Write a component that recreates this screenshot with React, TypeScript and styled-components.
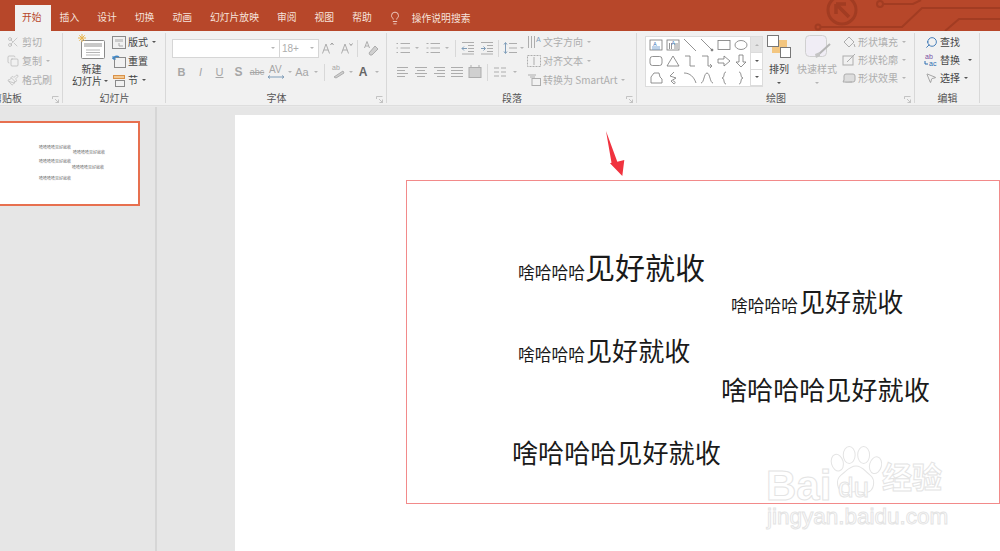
import React from "react";
import styled, { createGlobalStyle } from "styled-components";
import { Scissors, Copy, Paintbrush, Search, MousePointer2, Lightbulb } from "lucide-react";

const Global = createGlobalStyle`
  html, body { margin: 0; padding: 0; width: 100%; height: 100%; overflow: hidden; background: #e6e6e6; }
  #root { width: 1000px; height: 551px; }
  * { box-sizing: border-box; }
`;
const FONT = `"Noto Sans CJK SC", "Noto Sans", sans-serif`;

const Page = styled.div`
  width: 1000px; height: 551px; display: flex; flex-direction: column; overflow: hidden;
  font-family: ${FONT}; position: relative; background: #e6e6e6;
`;
const TitleBar = styled.div`
  position: relative; height: 31px; flex: none; background: #b7472a; display: flex; align-items: flex-end;
  padding-left: 15px; color: #f6e3dc; font-size: 9.8px; overflow: hidden;
`;
const Tab = styled.div<{ $active?: boolean }>`
  height: 26px; display: flex; align-items: center; padding: 0 9px 1px ${(p) => (p.$active ? "7px" : "9px")};
  background: ${(p) => (p.$active ? "#f1f1f1" : "transparent")}; color: ${(p) => (p.$active ? "#b7472a" : "#f6e3dc")};
  white-space: nowrap; line-height: 1;
`;
const TellMe = styled.div`
  height: 26px; display: flex; align-items: center; gap: 10px; margin-left: 7px; padding-bottom: 1px; white-space: nowrap;
`;
const Circuit = styled.svg`
  position: absolute; right: 0; top: 0; width: 200px; height: 31px;
`;
const Ribbon = styled.div`
  height: 75px; flex: none; background: #f1f1f1; display: flex; border-bottom: 1px solid #dedede; overflow: hidden;
`;
const Group = styled.div<{ $w: number; $off?: number }>`
  position: relative; flex: none; width: ${(p) => p.$w}px; margin-left: ${(p) => p.$off ?? 0}px;
  display: flex; flex-direction: column; height: 74px;
  &::after { content: ""; position: absolute; right: 0; top: 2px; bottom: 2px; width: 1px; background: #d8d8d8; }
`;
const Body = styled.div<{ $pl: number; $col?: boolean }>`
  flex: none; height: 60px; padding: 2px 0 0 ${(p) => p.$pl}px; display: flex; flex-direction: ${(p) => (p.$col ? "column" : "row")};
`;
const GroupLabel = styled.div`
  flex: none; height: 14px; text-align: center; font-size: 10px; line-height: 14px; color: #555;
`;
const Launcher = styled.svg`
  position: absolute; right: 4px; bottom: 2px; width: 7px; height: 7px; color: #b8b8b8;
`;
const Stack = styled.div<{ $w?: number }>`
  display: flex; flex-direction: column; gap: 1px; ${(p) => (p.$w ? `width:${p.$w}px;flex:none;` : "")}
`;
const SmallBtn = styled.div<{ $on?: boolean }>`
  height: 18px; display: flex; align-items: center; gap: 2px; font-size: 10px; line-height: 1; white-space: nowrap;
  color: ${(p) => (p.$on ? "#444" : "#adadad")};
`;
const IconBox = styled.span<{ $w?: number; $c?: string }>`
  display: inline-flex; align-items: center; justify-content: center; flex: none;
  width: ${(p) => p.$w ?? 14}px; height: 14px; color: ${(p) => p.$c ?? "#adadad"};
`;
const Caret = styled.span<{ $on?: boolean }>`
  display: inline-block; flex: none; margin-left: 2px; width: 0; height: 0;
  border-left: 2px solid transparent; border-right: 2px solid transparent;
  border-top: 2.5px solid ${(p) => (p.$on ? "#555" : "#b5b5b5")};
`;
const BigBtn = styled.div<{ $w: number; $on?: boolean; $ml?: number }>`
  width: ${(p) => p.$w}px; flex: none; display: flex; flex-direction: column; align-items: center;
  margin-left: ${(p) => p.$ml ?? 0}px;
  font-size: 10px; line-height: 12px; color: ${(p) => (p.$on ? "#444" : "#adadad")}; white-space: nowrap;
`;
const BigIcon = styled.svg`
  width: 28px; height: 26px; margin-top: 1px; margin-bottom: 3px; flex: none;
`;
const Line = styled.div`
  display: flex; align-items: center; height: 12px;
`;
const FieldRow = styled.div`
  display: flex; align-items: center; height: 20px; margin-top: 5px; padding-right: 4px;
`;
const Field = styled.div<{ $w: number }>`
  width: ${(p) => p.$w}px; height: 19px; background: #fff; border: 1px solid #d6d6d6; margin-right: -1px;
  display: flex; align-items: center; justify-content: space-between; padding: 0 4px 0 2px;
  font-size: 10px; color: #adadad; font-family: "Liberation Sans", sans-serif;
`;
const ToolRow = styled.div`
  display: flex; align-items: center; height: 20px;
`;
const Tool = styled.span<{ $w: number; $on?: boolean; $b?: boolean; $i?: boolean; $u?: boolean; $s?: boolean; $fs?: number }>`
  width: ${(p) => p.$w}px; flex: none; display: inline-flex; align-items: center; justify-content: center;
  font-family: "Liberation Sans", sans-serif; font-size: ${(p) => p.$fs ?? 11}px; color: ${(p) => (p.$on ? "#666" : "#a6a6a6")};
  font-weight: ${(p) => (p.$b ? 700 : 400)}; font-style: ${(p) => (p.$i ? "italic" : "normal")};
  text-decoration: ${(p) => (p.$u ? "underline" : p.$s ? "line-through" : "none")};
`;
const VSep = styled.span<{ $mx: number }>`
  width: 1px; height: 17px; background: #d8d8d8; flex: none; margin: 0 ${(p) => p.$mx}px;
`;
const Gallery = styled.div`
  display: flex; height: 51px; margin-top: 3px; flex: none; border: 1px solid #dcdcdc; background: #fff;
`;
const Shapes = styled.div`
  width: 104px; display: grid; grid-template-columns: repeat(6, 1fr); grid-template-rows: repeat(3, 1fr); padding: 0 1px; color: #777;
`;
const Shape = styled.svg`
  width: 14px; height: 14px; justify-self: center; align-self: center;
`;
const GalleryScroll = styled.div`
  width: 12px; display: flex; flex-direction: column; background: #f1f1f1; border-left: 1px solid #dcdcdc;
`;
const ScrollCell = styled.div<{ $dim?: boolean }>`
  flex: 1; display: flex; align-items: center; justify-content: center; border-bottom: 1px solid #dcdcdc;
  background: ${(p) => (p.$dim ? "#e4e4e4" : "#fff")};
`;
const Workspace = styled.div`
  flex: 1; display: flex; min-height: 0; background: #e6e6e6; border-top: 1px solid #e9e9e9;
`;
const Sidebar = styled.aside`
  width: 157px; flex: none; border-right: 2px solid #d6d6d6; padding-top: 14px; overflow: hidden;
`;
const Thumb = styled.div`
  position: relative; width: 140px; height: 85px; background: #fff; border: 2px solid #e7704f; border-left: none;
  font-size: 4px; color: #666; line-height: 5px;
`;
const ThumbText = styled.span<{ $x: number; $y: number }>`
  position: absolute; left: ${(p) => p.$x}px; top: ${(p) => p.$y}px; white-space: nowrap;
`;
const Stage = styled.main`
  flex: 1; padding: 8px 0 0 78px; overflow: hidden; min-width: 0;
`;
const Slide = styled.div`
  position: relative; width: 765px; height: 500px; background: #fff;
`;
const Selection = styled.div`
  position: absolute; left: 171px; top: 65px; width: 594px; height: 324px; border: 1px solid #f28a8a;
`;
const Arrow = styled.svg`
  position: absolute; left: 365px; top: 10px; width: 30px; height: 56px;
`;
const SlideLine = styled.div<{ $x: number; $y: number }>`
  position: absolute; left: ${(p) => p.$x}px; top: ${(p) => p.$y}px; transform: translateY(-50%);
  white-space: nowrap; color: #1a1a1a; font-size: 26.1px; line-height: 40px; display: flex; align-items: baseline;
`;
const Small = styled.span`
  font-size: 16.75px; margin-right: 1px;
`;
const Large = styled.span`
  font-size: 30px; margin-left: -1px;
`;
const Watermark = styled.div`
  position: absolute; left: 0; top: 0; pointer-events: none;
`;
const Outline = styled.span<{ $x: number; $y: number; $fs: number; $ls?: number; $sans?: boolean }>`
  position: absolute; left: ${(p) => p.$x}px; top: ${(p) => p.$y}px; font-size: ${(p) => p.$fs}px; line-height: 1;
  white-space: nowrap; color: #fff; -webkit-text-stroke: 1px #e4e4e4; letter-spacing: ${(p) => p.$ls ?? 0}px;
  font-family: ${(p) => (p.$sans ? `"Liberation Sans", sans-serif` : FONT)}; font-weight: 700;
`;
const Paw = styled.svg`
  position: absolute; left: 593px; top: 327px; width: 56px; height: 60px;
`;

const tabs = ["插入", "设计", "切换", "动画", "幻灯片放映", "审阅", "视图", "帮助"];

const LauncherIcon = () => (
  <Launcher viewBox="0 0 7 7" fill="none" stroke="currentColor" strokeWidth="0.8">
    <path d="M.5 3V.5H6.5M3 3l3.5 3.5M6.5 3.5v3h-3" />
  </Launcher>
);

const Lines = ({ rows, c = "#adadad" }: { rows: [number, number][]; c?: string }) => (
  <svg width="14" height="14" viewBox="0 0 14 14" stroke={c} strokeWidth="1" fill="none">
    {rows.map(([a, b], i) => (
      <path key={i} d={`M${a} ${2.5 + (i * 9) / Math.max(rows.length - 1, 1)}H${b}`} />
    ))}
  </svg>
);
const ListIcon = ({ n }: { n?: boolean }) => (
  <svg width="14" height="14" viewBox="0 0 14 14" stroke="#adadad" fill="none">
    {[2.5, 7, 11.5].map((y) => (
      <g key={y}>
        <path d={`M0.5 ${y}h${n ? 2 : 1.5}`} />
        <path d={`M4.5 ${y}H14`} />
      </g>
    ))}
  </svg>
);
const IndentIcon = ({ flip }: { flip?: boolean }) => (
  <svg width="14" height="14" viewBox="0 0 14 14" stroke="#adadad" fill="none">
    <path d="M1 1.5H13M7 4.5H13M7 7.5H13M7 10.5H13M1 13H13" />
    <path d={flip ? "M1 7.5H5M3.5 5.5l2 2-2 2" : "M6 7.5H1M3 5.5l-2 2 2 2"} stroke="#7f9db9" />
  </svg>
);
const LineSpacing = () => (
  <svg width="14" height="14" viewBox="0 0 14 14" stroke="#adadad" fill="none">
    <path d="M6 2.500H14M6 7H14M6 11.500H14" />
    <path d="M2.500 2v10M1 3.500l1.500-2 1.500 2M1 10.500l1.500 2 1.500-2" stroke="#7f9db9" />
  </svg>
);
const FontStep = ({ up }: { up?: boolean }) => (
  <svg width="14" height="14" viewBox="0 0 14 14" fill="none" stroke="#adadad" strokeWidth="1">
    <path d="M1.500 12.500L5 3l3.500 9.500M2.800 9h4.400" />
    <path d={up ? "M9.500 4l1.500-2 1.500 2" : "M9.500 2.500L11 4.500l1.500-2"} stroke="#999" />
  </svg>
);
const ClearFormat = () => (
  <svg width="16" height="16" viewBox="0 0 16 16" fill="none" stroke="#adadad">
    <path d="M1.500 8L4 1.500 6.500 8M2.500 6h3" />
    <path d="M6 13l6-7 3 3-6 6H7z" fill="#cfcfcf" />
  </svg>
);
const Highlighter = () => (
  <svg width="16" height="16" viewBox="0 0 16 16" fill="none" stroke="#adadad">
    <text x="1" y="6" fontSize="7" fill="#a6a6a6" stroke="none" fontFamily="Liberation Sans">ab</text>
    <path d="M3 13l9-6 1 2-8 5z" fill="#cfcfcf" />
  </svg>
);
const CharSpacing = () => (
  <svg width="18" height="16" viewBox="0 0 18 16" fill="none" stroke="#a6a6a6">
    <text x="2" y="9" fontSize="10" fill="#a6a6a6" stroke="none" fontFamily="Liberation Sans">AV</text>
    <path d="M1 13h16M3 11.500L1 13l2 1.500M15 11.500l2 1.500-2 1.500" stroke="#7f9db9" />
  </svg>
);

const shapes: React.ReactNode[] = [
  <><rect x="1" y="2" width="12" height="10" /><path d="M3 9h8M3 11h8" stroke="#5b8fc9" /><text x="4.2" y="7.5" fontSize="5" fill="#2f6fb5" stroke="none" fontFamily="Liberation Sans">A</text></>,
  <><rect x="1" y="2" width="12" height="10" /><path d="M3.5 5v6M5.5 5v6M9 5v6M11 5v6" stroke="#777" /><text x="5.4" y="6.5" fontSize="5" fill="#2f6fb5" stroke="none" fontFamily="Liberation Sans">A</text></>,
  <path d="M1 1l12 12" />,
  <><path d="M1 1l11 11" /><circle cx="12" cy="12" r="1" fill="#777" /></>,
  <rect x="1" y="2.5" width="12" height="9" />,
  <ellipse cx="7" cy="7" rx="6" ry="4.5" />,
  <rect x="1" y="2.5" width="12" height="9" rx="2.5" />,
  <path d="M7 2l6 10H1z" />,
  <path d="M2 2h5v10h5" />,
  <path d="M2 2h6v10h3M10 10l2 2-2 2" />,
  <path d="M1 5h6V2l6 5-6 5V9H1z" />,
  <path d="M5 1h4v7h3l-5 5-5-5h3z" />,
  <path d="M2 12V6l3-4h5l1 4 2 2v4z" />,
  <path d="M8 1L4 5l6 2-5 3 3 3c2-1 1-3-1-3" />,
  <path d="M1 2c6 0 10 4 12 10" />,
  <path d="M1 12c3 0 3-10 6-10s3 10 6 10" />,
  <path d="M9 1C6 1 8 7 5 7c3 0 1 6 4 6" />,
  <path d="M5 1c3 0 1 6 4 6-3 0-1 6-4 6" />,
];

const SlideThumbnail = () => (
  <Thumb>
    <ThumbText $x={39} $y={22}>哈哈哈哈见好就收</ThumbText>
    <ThumbText $x={73} $y={27}>哈哈哈哈见好就收</ThumbText>
    <ThumbText $x={39} $y={36}>哈哈哈哈见好就收</ThumbText>
    <ThumbText $x={72} $y={42}>哈哈哈哈见好就收</ThumbText>
    <ThumbText $x={39} $y={53}>哈哈哈哈见好就收</ThumbText>
  </Thumb>
);

export default function App() {
  return (
    <Page>
      <Global />
      <TitleBar>
        <Tab $active>开始</Tab>
        {tabs.map((t) => (
          <Tab key={t}>{t}</Tab>
        ))}
        <TellMe>
          <Lightbulb size={14} strokeWidth={1.4} />
          操作说明搜索
        </TellMe>
        <Circuit viewBox="800 0 200 31" fill="none" stroke="#a23c22" strokeWidth="2">
          <circle cx="842" cy="10" r="14" strokeWidth="3" />
          <path d="M836 4h10M836 4v10M836 4l13 13" strokeWidth="3.5" />
          <circle cx="880" cy="4" r="3" />
          <path d="M883 4h30l8-4" />
          <circle cx="818" cy="27" r="2.5" />
          <path d="M820 27h82l20-19h78" />
          <path d="M945 31l14-12h41" />
        </Circuit>
      </TitleBar>
      <Ribbon>
        <Group $w={112} $off={-49}>
          <Body $pl={55} $col>
            <SmallBtn><IconBox><Scissors size={12} strokeWidth={1.2} /></IconBox>剪切</SmallBtn>
            <SmallBtn style={{ marginTop: 1 }}><IconBox><Copy size={12} strokeWidth={1.2} /></IconBox>复制<Caret /></SmallBtn>
            <SmallBtn style={{ marginTop: 1 }}><IconBox><Paintbrush size={12} strokeWidth={1.2} /></IconBox>格式刷</SmallBtn>
          </Body>
          <GroupLabel>剪贴板</GroupLabel>
          <LauncherIcon />
        </Group>
        <Group $w={103}>
          <Body $pl={8}>
            <BigBtn $w={41} $on>
              <BigIcon viewBox="0 0 28 26" fill="none">
                <rect x="3.5" y="6.5" width="23" height="18" rx="1" fill="#fff" stroke="#8a8a8a" />
                <rect x="6" y="9" width="18" height="4" fill="#c8c8c8" />
                <path d="M8 16h14M8 18.500h14M8 21h14" stroke="#b5b5b5" />
                <path d="M4 0v8M0 4h8M1.300 1.300l5.400 5.400M6.700 1.300L1.300 6.700" stroke="#e9b44c" />
              </BigIcon>
              <Line>新建</Line>
              <Line style={{ marginLeft: -3 }}>幻灯片<Caret $on /></Line>
            </BigBtn>
            <Stack>
              <SmallBtn $on>
                <IconBox $c="#8a8a8a"><svg width="14" height="13" viewBox="0 0 14 13" fill="none" stroke="currentColor"><rect x=".5" y=".5" width="13" height="12" /><rect x="3" y="3" width="8" height="3" fill="#ccc" stroke="none" /><path d="M7 7v3h4" stroke="#aaa" /></svg></IconBox>
                版式<Caret $on />
              </SmallBtn>
              <SmallBtn $on>
                <IconBox $c="#8a8a8a"><svg width="14" height="13" viewBox="0 0 14 13" fill="none" stroke="currentColor"><rect x="2.500" y="2.500" width="11" height="10" /><path d="M1 4a4 4 0 0 1 6-2" stroke="#3f87c7" strokeWidth="1.500" /><path d="M1 1v3h3" stroke="#3f87c7" /></svg></IconBox>
                重置
              </SmallBtn>
              <SmallBtn $on>
                <IconBox><svg width="14" height="13" viewBox="0 0 14 13" fill="none"><rect x="1.500" y="1.500" width="11" height="3" fill="#f3c993" stroke="#d9924a" /><rect x="3.500" y="6.500" width="9" height="6" stroke="#8a8a8a" /></svg></IconBox>
                节<Caret $on />
              </SmallBtn>
            </Stack>
          </Body>
          <GroupLabel>幻灯片</GroupLabel>
        </Group>
        <Group $w={221}>
          <Body $pl={6} $col>
            <FieldRow>
              <Field $w={108}><span /><Caret /></Field>
              <Field $w={40}>18+<Caret /></Field>
              <Tool $w={20}><FontStep up /></Tool>
              <Tool $w={17}><FontStep /></Tool>
              <VSep $mx={2} />
              <Tool $w={22}><ClearFormat /></Tool>
            </FieldRow>
            <ToolRow style={{ marginTop: 4 }}>
              <Tool $w={19} $b>B</Tool>
              <Tool $w={19} $i>I</Tool>
              <Tool $w={19} $u>U</Tool>
              <Tool $w={19} $b $fs={12}>S</Tool>
              <Tool $w={18} $s $fs={9}>abc</Tool>
              <Tool $w={20}><CharSpacing /></Tool>
              <Caret />
              <Tool $w={20}>Aa</Tool>
              <Caret />
              <VSep $mx={6} />
              <Tool $w={16}><Highlighter /></Tool>
              <Caret />
              <Tool $w={20} $on $b $fs={12}>A</Tool>
              <Caret />
            </ToolRow>
          </Body>
          <GroupLabel>字体</GroupLabel>
          <LauncherIcon />
        </Group>
        <Group $w={250}>
          <Body $pl={9}>
            <Stack $w={131}>
              <ToolRow style={{ marginTop: 5, gap: 0 }}>
                <ListIcon /><Caret style={{ margin: "0 7px 0 5px" }} />
                <ListIcon n /><Caret style={{ margin: "0 6px 0 5px" }} />
                <VSep $mx={0} />
                <span style={{ width: 5 }} />
                <IndentIcon /><span style={{ width: 5 }} /><IndentIcon flip />
                <VSep $mx={4} />
                <LineSpacing /><Caret style={{ marginLeft: 3 }} />
              </ToolRow>
              <ToolRow style={{ marginTop: 3, gap: 4 }}>
                <Lines rows={[[1, 12], [1, 9], [1, 12], [1, 9]]} />
                <Lines rows={[[1, 13], [3, 11], [1, 13], [3, 11]]} />
                <Lines rows={[[2, 13], [5, 13], [2, 13], [5, 13]]} />
                <Lines rows={[[1, 13], [1, 13], [1, 13], [1, 13]]} />
                <svg width="14" height="14" viewBox="0 0 14 14" fill="#d0d0d0" stroke="#adadad"><rect x="1" y="2.500" width="12" height="10" /><path d="M3 0v3M11 0v3" /></svg>
                <VSep $mx={1} />
                <svg width="14" height="14" viewBox="0 0 14 14" fill="none" stroke="#adadad"><path d="M1 3h5M8 3h5M1 7h5M8 7h5M1 11h5M8 11h5" /></svg>
                <Caret />
              </ToolRow>
            </Stack>
            <Stack>
              <SmallBtn>
                <IconBox><svg width="14" height="14" viewBox="0 0 14 14" fill="none" stroke="#adadad"><path d="M1.500 1v12M4.500 1v12M7.500 1v12" /><text x="9" y="7" fontSize="7" fill="#7f9db9" stroke="none" fontFamily="Liberation Sans">A</text></svg></IconBox>文字方向<Caret />
              </SmallBtn>
              <SmallBtn>
                <IconBox><svg width="14" height="14" viewBox="0 0 14 14" fill="none" stroke="#adadad" strokeDasharray="2 1"><rect x=".5" y="1.500" width="13" height="11" /><path d="M7 3v8" strokeDasharray="none" /></svg></IconBox>对齐文本<Caret />
              </SmallBtn>
              <SmallBtn>
                <IconBox><svg width="14" height="14" viewBox="0 0 14 14" fill="none" stroke="#adadad"><rect x="5" y="5.500" width="8.500" height="7" /><path d="M1 2h8M3 4h5" /></svg></IconBox>转换为 SmartArt<Caret />
              </SmallBtn>
            </Stack>
          </Body>
          <GroupLabel>段落</GroupLabel>
          <LauncherIcon />
        </Group>
        <Group $w={278}>
          <Body $pl={8}>
            <Gallery>
              <Shapes>
                {shapes.map((s, i) => (
                  <Shape key={i} viewBox="0 0 14 14" fill="none" stroke="currentColor" strokeWidth="0.8">{s}</Shape>
                ))}
              </Shapes>
              <GalleryScroll>
                <ScrollCell $dim><Caret style={{ transform: "rotate(180deg)", margin: 0 }} /></ScrollCell>
                <ScrollCell><Caret $on style={{ margin: 0 }} /></ScrollCell>
                <ScrollCell><Caret $on style={{ margin: 0 }} /></ScrollCell>
              </GalleryScroll>
            </Gallery>
            <BigBtn $w={36} $ml={-2} $on>
              <BigIcon viewBox="0 0 28 26" fill="none">
                <rect x="7" y="6" width="15" height="13" fill="#f3c680" />
                <rect x="2.500" y="1.500" width="11" height="11" fill="#fff" stroke="#777" />
                <rect x="15.500" y="13.500" width="10" height="10" fill="#fff" stroke="#777" />
              </BigIcon>
              <Line>排列</Line>
              <Line><Caret $on style={{ margin: "4px 0 0" }} /></Line>
            </BigBtn>
            <BigBtn $w={40}>
              <BigIcon viewBox="0 0 28 26" fill="none">
                <rect x="2.500" y="1.500" width="21" height="21" rx="4" fill="#f0edf5" stroke="#d0d0d0" />
                <path d="M27 10L16 20" stroke="#b5b5b5" strokeWidth="2" />
                <path d="M17 18l-5 2 1 4 4-2z" fill="#c4c4c4" />
              </BigIcon>
              <Line>快速样式</Line>
              <Line><Caret style={{ margin: "4px 0 0" }} /></Line>
            </BigBtn>
            <Stack style={{ marginLeft: 5, gap: 0 }}>
              <SmallBtn>
                <IconBox><svg width="14" height="14" viewBox="0 0 14 14" fill="none" stroke="#adadad"><path d="M2 7l5-5 5 5-5 5z" /><path d="M12 9l1 3" /></svg></IconBox>形状填充<Caret />
              </SmallBtn>
              <SmallBtn>
                <IconBox><svg width="14" height="14" viewBox="0 0 14 14" fill="none" stroke="#adadad"><rect x="1" y="3" width="10" height="9" /><path d="M5 9l8-8" /></svg></IconBox>形状轮廓<Caret />
              </SmallBtn>
              <SmallBtn>
                <IconBox><svg width="14" height="14" viewBox="0 0 14 14" fill="#ddd" stroke="#adadad"><rect x="2" y="3" width="11" height="8" rx="2" /><path d="M2 9l-1 2h9" /></svg></IconBox>形状效果<Caret />
              </SmallBtn>
            </Stack>
          </Body>
          <GroupLabel>绘图</GroupLabel>
          <LauncherIcon />
        </Group>
        <Group $w={65}>
          <Body $pl={9} $col>
            <SmallBtn $on><IconBox $c="#2b6cb0"><Search size={13} strokeWidth={1.6} style={{ transform: "scaleX(-1)" }} /></IconBox>查找</SmallBtn>
            <SmallBtn $on>
              <IconBox><svg width="14" height="14" viewBox="0 0 14 14" fill="none"><text x="1" y="6" fontSize="7" fill="#7a4fa3" fontFamily="Liberation Sans">ab</text><text x="5" y="13" fontSize="7" fill="#2b6cb0" fontFamily="Liberation Sans">ac</text><path d="M1 8v3h3" stroke="#2b6cb0" /></svg></IconBox>
              替换<Caret $on style={{ marginLeft: 6 }} />
            </SmallBtn>
            <SmallBtn $on><IconBox $c="#666"><MousePointer2 size={12} strokeWidth={1.1} /></IconBox>选择<Caret $on /></SmallBtn>
          </Body>
          <GroupLabel>编辑</GroupLabel>
        </Group>
      </Ribbon>
      <Workspace>
        <Sidebar>
          <SlideThumbnail />
        </Sidebar>
        <Stage>
          <Slide>
            <Arrow viewBox="0 0 30 56" fill="#f0333f">
              <path d="M6 6L17.300 36.700 24.300 35 22.300 51 10 38.300 11.500 37.700z" />
            </Arrow>
            <Selection />
            <SlideLine $x={283} $y={154}><Small>啥哈哈哈</Small><Large>见好就收</Large></SlideLine>
            <SlideLine $x={496} $y={188}><Small>啥哈哈哈</Small>见好就收</SlideLine>
            <SlideLine $x={283} $y={237}><Small>啥哈哈哈</Small>见好就收</SlideLine>
            <SlideLine $x={486} $y={274}>啥哈哈哈见好就收</SlideLine>
            <SlideLine $x={277} $y={337}>啥哈哈哈见好就收</SlideLine>
            <Watermark>
              <Outline $x={531} $y={350} $fs={42} $sans>Bai</Outline>
              <Paw viewBox="0 0 66 62" fill="#fff" stroke="#e4e4e4" strokeWidth="1.2">
                <ellipse cx="11" cy="20" rx="7" ry="10" transform="rotate(-15 11 20)" />
                <ellipse cx="25" cy="11" rx="7" ry="10" />
                <ellipse cx="42" cy="11" rx="7" ry="10" />
                <ellipse cx="56" cy="23" rx="7" ry="10" transform="rotate(15 56 23)" />
                <path d="M33 24c8 0 11 7 17 11 6 5 5 18-4 20-6 1-8-1-13-1s-8 2-14 1c-9-2-10-15-4-20 6-4 10-11 18-11z" />
              </Paw>
              <Outline $x={603} $y={359} $fs={28} $sans style={{ fontWeight: 400 }}>du</Outline>
              <Outline $x={647} $y={345} $fs={30}>经验</Outline>
              <Outline $x={532} $y={391} $fs={22.500} $sans style={{ fontWeight: 400 }}>jingyan.baidu.com</Outline>
            </Watermark>
          </Slide>
        </Stage>
      </Workspace>
    </Page>
  );
}
